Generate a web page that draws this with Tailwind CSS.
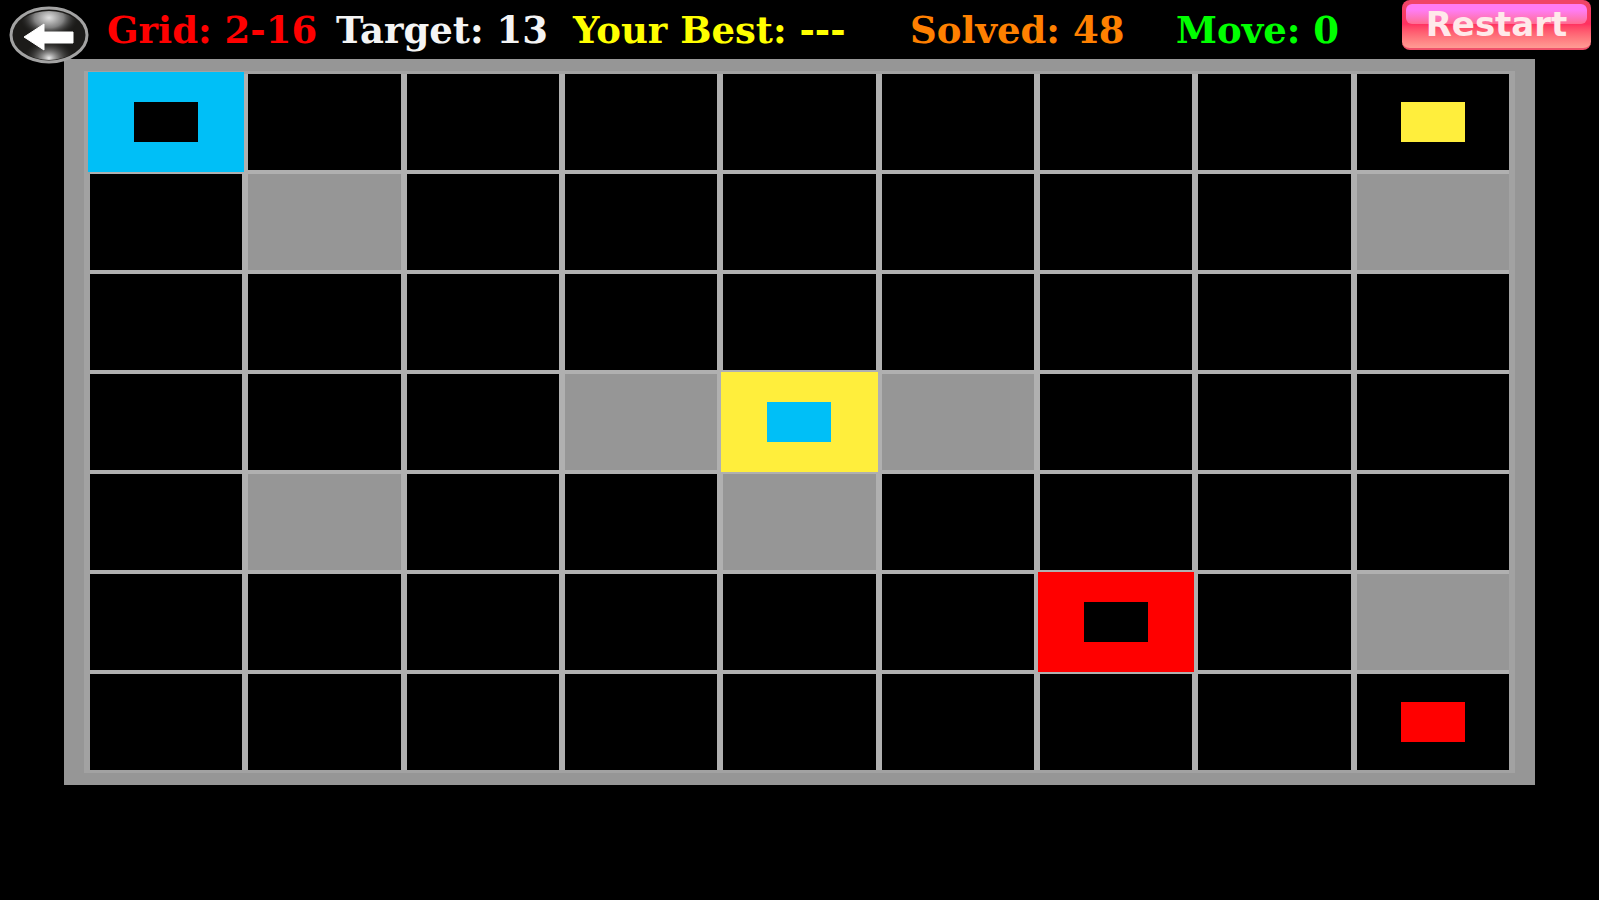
<!DOCTYPE html>
<html lang="en">
<head>
    <meta charset="UTF-8">
    <meta name="viewport" content="width=device-width, initial-scale=1.0">
    <title>Grid 2-16</title>
    <script src="https://cdn.jsdelivr.net/npm/@tailwindcss/browser@4"></script>
</head>
<body class="bg-black min-h-screen">
    <!-- Status bar -->
    <header class="grid grid-cols-[107px_229fr_237fr_337fr_266fr_226fr_197px] h-[59px] text-[37px] leading-[60px] font-bold font-['DejaVu_Serif',serif] whitespace-nowrap">
        <button aria-label="Back" class="relative z-10 ml-2 mt-1.5 w-[82px] h-[59px]">
            <svg viewBox="0 0 82 59" class="block w-full h-full">
                <defs>
                    <radialGradient id="shineTop" cx="50%" cy="14%" r="42%">
                        <stop offset="0" stop-color="#e0e0e0"/>
                        <stop offset="0.5" stop-color="#808080"/>
                        <stop offset="1" stop-color="#222222" stop-opacity="0"/>
                    </radialGradient>
                    <radialGradient id="shineBottom" cx="50%" cy="96%" r="36%">
                        <stop offset="0" stop-color="#eeeeee"/>
                        <stop offset="1" stop-color="#333333" stop-opacity="0"/>
                    </radialGradient>
                </defs>
                <ellipse cx="41" cy="29" rx="38" ry="27" fill="#1c1b19" stroke="#a3a3a3" stroke-width="3"/>
                <ellipse cx="41" cy="29" rx="35" ry="24" fill="url(#shineTop)"/>
                <ellipse cx="41" cy="29" rx="35" ry="25" fill="url(#shineBottom)"/>
                <path d="M16 31 L36 18 V26 H65 V37 H36 V44 Z" fill="#ffffff" stroke="#ffffff" stroke-linejoin="round"/>
            </svg>
        </button>
        <span class="text-[#ff0000]">Grid: 2-16</span>
        <span class="text-[#f4f4f4]">Target: 13</span>
        <span class="text-[#ffff00]">Your Best: ---</span>
        <span class="text-[#ff8000]">Solved: 48</span>
        <span class="text-[#00ff00]">Move: 0</span>
        <button class="w-[189px] h-[50px] rounded-lg border-b-2 border-[#f0506a] bg-linear-to-b from-[#f04468] from-6% via-[#ff3060] via-50% to-[#ff9c94] text-[34px] leading-[48px] text-[#ffe9ea] font-['DejaVu_Sans',sans-serif] relative">
            <span class="absolute inset-x-1 top-1 h-5 rounded-md bg-linear-to-b from-[#ff7cf4] from-30% to-[#ff6c90]"></span>
            <span class="relative">Restart</span>
        </button>
    </header>

    <!-- Board, 9 x 7 -->
    <main class="mx-16 bg-[#969696] px-5 py-3">
        <div id="board" class="grid grid-cols-9 gap-x-1.5 gap-y-1 bg-[#b0b0b0] border-x-6 border-y-3 border-[#a2a2a2]"></div>
    </main>

    <script>
        // . empty, # wall, B/Y/R colored blocks, y/r targets
        const level = [
            'B.......y',
            '.#......#',
            '.........',
            '...#Y#...',
            '.#..#....',
            '......R.#',
            '........r',
        ];

        const cellClass = {
            '.': 'bg-black',
            '#': 'bg-[#969696]',
            'B': 'bg-[#00bff7] ring-2 ring-[#00bff7]',
            'Y': 'bg-[#ffee3c] ring-2 ring-[#ffee3c]',
            'R': 'bg-[#ff0000] ring-2 ring-[#ff0000]',
            'y': 'bg-black',
            'r': 'bg-black',
        };

        const markClass = {
            'B': 'bg-black',
            'Y': 'bg-[#00bff7]',
            'R': 'bg-black',
            'y': 'bg-[#ffee3c]',
            'r': 'bg-[#ff0000]',
        };

        const board = document.getElementById('board');
        level.join('').split('').forEach(type => {
            const cell = document.createElement('div');
            cell.className = 'h-24 flex items-center justify-center ' + cellClass[type];
            if (markClass[type]) {
                cell.innerHTML = `<div class="w-16 h-10 ${markClass[type]}"></div>`;
            }
            board.appendChild(cell);
        });
    </script>
</body>
</html>
